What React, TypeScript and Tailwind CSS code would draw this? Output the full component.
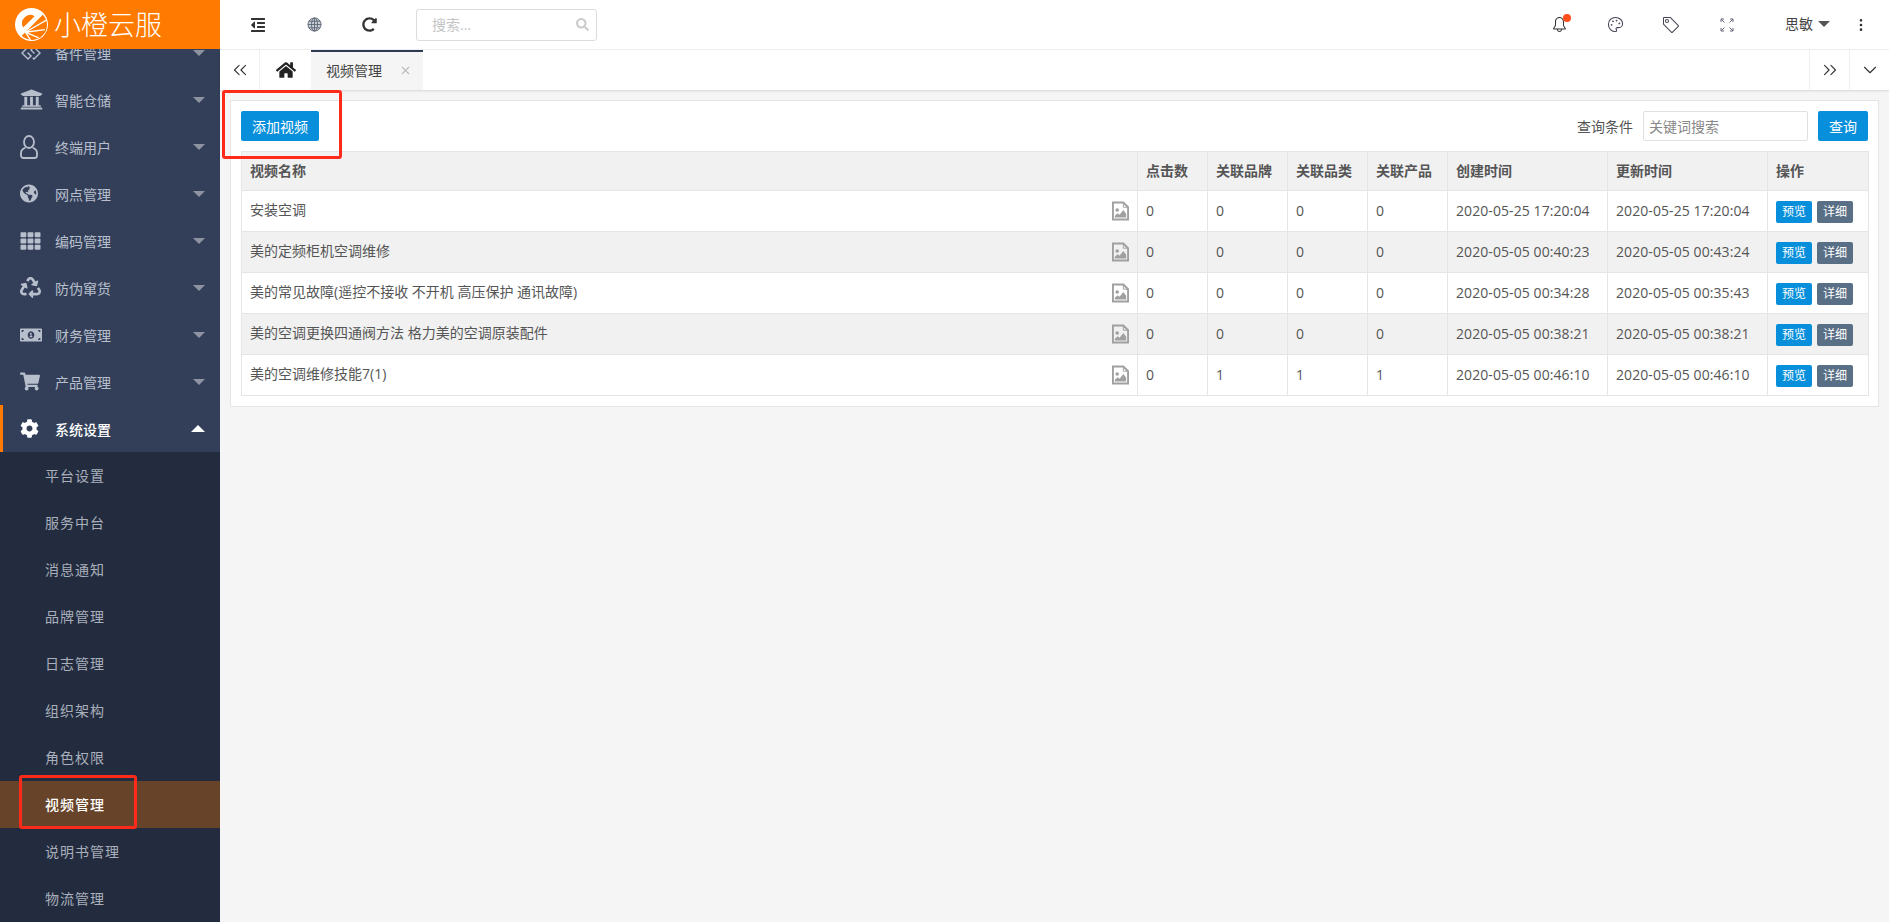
import type { ReactNode } from 'react'
import {
  FaGg,
  FaUniversity,
  FaGlobeAmericas,
  FaTh,
  FaRecycle,
  FaMoneyBillAlt,
  FaShoppingCart,
  FaCog,
  FaHome,
  FaOutdent,
  FaRedoAlt,
  FaSearch,
} from 'react-icons/fa'
import { SlBell, SlTag } from 'react-icons/sl'
import { LuPalette, LuChevronsLeft, LuChevronsRight, LuChevronDown, LuEllipsisVertical, LuX } from 'react-icons/lu'

const fontStack = "font-['Open_Sans','Noto_Sans_CJK_SC',sans-serif]"

function UserIcon() {
  return (
    <svg viewBox="0 0 18 24" className="h-[24px] w-[18px]" fill="none" stroke="currentColor" strokeWidth="1.8">
      <ellipse cx="9" cy="7" rx="5" ry="6" />
      <path d="M5.5 12.5C3 13.5 1 15 1 18v2.5a2.5 2.5 0 0 0 2.5 2.5h11a2.5 2.5 0 0 0 2.5-2.5V18c0-3-2-4.500-4.500-5.500" />
    </svg>
  )
}

const mainMenu: { label: string; icon: ReactNode }[] = [
  { label: '备件管理', icon: <FaGg className="h-[20px] w-[22px]" /> },
  { label: '智能仓储', icon: <FaUniversity className="h-[23px] w-[23px]" /> },
  { label: '终端用户', icon: <UserIcon /> },
  { label: '网点管理', icon: <FaGlobeAmericas className="h-[19px] w-[18px]" /> },
  { label: '编码管理', icon: <FaTh className="h-[20px] w-[21px]" /> },
  { label: '防伪窜货', icon: <FaRecycle className="h-[21px] w-[21px]" /> },
  { label: '财务管理', icon: <FaMoneyBillAlt className="h-[20px] w-[22px]" /> },
  { label: '产品管理', icon: <FaShoppingCart className="h-[19px] w-[20px]" /> },
]

const subMenu = ['平台设置', '服务中台', '消息通知', '品牌管理', '日志管理', '组织架构', '角色权限', '视频管理', '说明书管理', '物流管理']

const columns = [
  { label: '视频名称', width: 'w-[896px]' },
  { label: '点击数', width: 'w-[70px]' },
  { label: '关联品牌', width: 'w-[80px]' },
  { label: '关联品类', width: 'w-[80px]' },
  { label: '关联产品', width: 'w-[80px]' },
  { label: '创建时间', width: 'w-[160px]' },
  { label: '更新时间', width: 'w-[160px]' },
  { label: '操作', width: 'w-[101px]' },
]

const videos = [
  { name: '安装空调', clicks: 0, brand: 0, category: 0, product: 0, created: '2020-05-25 17:20:04', updated: '2020-05-25 17:20:04' },
  { name: '美的定频柜机空调维修', clicks: 0, brand: 0, category: 0, product: 0, created: '2020-05-05 00:40:23', updated: '2020-05-05 00:43:24' },
  { name: '美的常见故障(遥控不接收 不开机 高压保护 通讯故障)', clicks: 0, brand: 0, category: 0, product: 0, created: '2020-05-05 00:34:28', updated: '2020-05-05 00:35:43' },
  { name: '美的空调更换四通阀方法 格力美的空调原装配件', clicks: 0, brand: 0, category: 0, product: 0, created: '2020-05-05 00:38:21', updated: '2020-05-05 00:38:21' },
  { name: '美的空调维修技能7(1)', clicks: 0, brand: 1, category: 1, product: 1, created: '2020-05-05 00:46:10', updated: '2020-05-05 00:46:10' },
]

function LogoMark() {
  return (
    <svg viewBox="0 0 32 32" className="h-[33px] w-[33px] shrink-0">
      <circle cx="16" cy="16" r="16" fill="#fff" />
      <path d="M19 8A8 8 0 0 0 8 19Z" fill="#ff7a00" />
      <path d="M27 6.500A14.500 14.500 0 0 1 6.500 27L10 23.500Z" fill="#ff7a00" />
      <path d="M10 23.500 15 31M10 23.500 23 29M10 23.500 29 21M10 23.500 30 12" stroke="#fff" strokeWidth="1.300" fill="none" />
    </svg>
  )
}

function Triangle({ up = false, className }: { up?: boolean; className: string }) {
  return (
    <svg viewBox="0 0 12 6" className={className} fill="currentColor">
      <path d={up ? 'M6 0 12 6H0Z' : 'M0 0H12L6 6Z'} />
    </svg>
  )
}

function Sidebar() {
  return (
    <aside className="flex h-full w-[220px] shrink-0 flex-col overflow-hidden bg-[#232c3f]">
      <div className="relative z-10 flex h-[49px] shrink-0 items-center gap-[6px] bg-[#ff7a00] pl-[15px]">
        <LogoMark />
        <span className="text-[27px] leading-none font-light text-white">小橙云服</span>
      </div>
      <ul className="-mt-[20px] bg-[#333f59]">
        {mainMenu.map(item => (
          <li key={item.label} className="flex h-[47px] items-center text-[14px] text-[#b8bfcc]">
            <span className="flex w-[55px] shrink-0 justify-start pl-[20px]">{item.icon}</span>
            <span className="pt-[2px]">{item.label}</span>
            <Triangle className="ml-auto mr-[15px] h-[6px] w-[12px] text-[#8d93a1]" />
          </li>
        ))}
        <li className="flex h-[47px] items-center border-l-[3px] border-[#ff7a00] text-[14px] font-medium text-white">
          <span className="flex w-[52px] shrink-0 pl-[17px]">
            <FaCog className="h-[19px] w-[19px]" />
          </span>
          <span className="pt-[2px]">系统设置</span>
          <Triangle up className="ml-auto mr-[15px] h-[7px] w-[14px]" />
        </li>
      </ul>
      <ul>
        {subMenu.map(name =>
          name === '视频管理' ? (
            <li key={name} className="relative flex h-[47px] items-center bg-[#674429] pb-[1px] pl-[45px] text-[14px] font-medium tracking-[1px] text-white">
              {name}
              {/* annotation box from the original screenshot */}
              <span className="absolute left-[19px] -top-[6px] h-[54px] w-[118px] rounded-[3px] border-[3px] border-[#ff2a1a]" />
            </li>
          ) : (
            <li key={name} className="flex h-[47px] items-center pb-[1px] pl-[45px] text-[14px] tracking-[1px] text-[#a9afbb]">
              {name}
            </li>
          ),
        )}
      </ul>
    </aside>
  )
}

function GridGlobe() {
  return (
    <svg viewBox="0 0 16 16" className="ml-[41px] h-[15px] w-[15px] text-[#55606f]" fill="#c9ced6" stroke="currentColor" strokeWidth="0.9">
      <circle cx="8" cy="8" r="7" />
      <ellipse cx="8" cy="8" rx="3.200" ry="7" fill="none" />
      <path d="M8 1v14M1 8h14M2 4.500h12M2 11.500h12" fill="none" />
    </svg>
  )
}

function TopBar() {
  return (
    <header className="flex h-[50px] shrink-0 items-center border-b border-[#f0f0f0] bg-white pl-[30px] text-[#333]">
      <FaOutdent className="h-[16px] w-[16px]" />
      <GridGlobe />
      <FaRedoAlt className="ml-[40px] h-[15px] w-[15px]" />
      <div className="ml-[39px] flex h-[32px] w-[181px] items-center justify-between rounded-[3px] border border-[#dcdcdc] pl-[15px] pr-[7px]">
        <span className="text-[14px] text-[#c4c4c4]">搜索...</span>
        <FaSearch className="h-[13px] w-[13px] text-[#ccc]" />
      </div>
      <div className="ml-auto flex items-center">
        <span className="relative">
          <SlBell className="h-[15px] w-[15px]" />
          <span className="absolute -top-[3px] left-[11px] h-[8px] w-[8px] rounded-full bg-[#ff4d1c]" />
        </span>
        <LuPalette className="ml-[40px] h-[17px] w-[17px] text-[#445]" strokeWidth={1.5} />
        <SlTag className="ml-[39px] h-[16px] w-[16px] -scale-x-100 text-[#445]" />
        <svg viewBox="0 0 14 14" className="ml-[41px] h-[14px] w-[14px] text-[#667]" fill="none" stroke="currentColor" strokeWidth="1">
          <path d="M1 4V1h3M1 1l3.500 3.500M13 4V1h-3M13 1 9.500 4.500M1 10v3h3M1 13l3.500-3.500M13 10v3h-3M13 13 9.500 9.500" />
        </svg>
        <span className="ml-[51px] pb-[2px] text-[14px] text-[#444]">思敏</span>
        <Triangle className="ml-[5px] mb-[2px] h-[6px] w-[12px] text-[#555]" />
        <LuEllipsisVertical className="ml-[23px] mr-[20px] h-[16px] w-[16px] text-[#333]" />
      </div>
    </header>
  )
}

function TabBar() {
  return (
    <div className="flex h-[40px] shrink-0 items-stretch bg-white shadow-[0_1px_2px_rgba(0,0,0,0.12)]">
      <button className="flex w-[40px] items-center justify-center border-r border-[#f0f0f0] text-[#333]">
        <LuChevronsLeft className="h-[22px] w-[22px]" strokeWidth={1.2} />
      </button>
      <button className="flex w-[51px] items-center justify-center text-[#222]">
        <FaHome className="h-[18px] w-[20px]" />
      </button>
      <div className="flex w-[112px] items-center border-t-2 border-[#2f3a55] bg-[#f5f5f5] pb-[2px] pl-[15px] text-[14px] text-[#444]">
        <span>视频管理</span>
        <LuX className="ml-[17px] h-[13px] w-[13px] text-[#bbb]" />
      </div>
      <button className="ml-auto flex w-[40px] items-center justify-center border-l border-[#f0f0f0] text-[#333]">
        <LuChevronsRight className="h-[22px] w-[22px]" strokeWidth={1.2} />
      </button>
      <button className="flex w-[40px] items-center justify-center border-l border-[#f0f0f0] text-[#333]">
        <LuChevronDown className="h-[22px] w-[22px]" strokeWidth={1.2} />
      </button>
    </div>
  )
}

function FileImageIcon() {
  return (
    <svg viewBox="0 0 18 20" className="h-[20px] w-[17px] text-[#a0a0a0]">
      <path d="M1 1h11l5 5v13H1Z" fill="none" stroke="currentColor" strokeWidth="2" />
      <path d="M12 1v5h5" fill="none" stroke="currentColor" strokeWidth="1" />
      <circle cx="5.500" cy="9" r="1.900" fill="currentColor" />
      <path d="M3 17v-2l3-2.500 2 1.500 4-5 3 4v4Z" fill="currentColor" />
    </svg>
  )
}

function VideoTable() {
  return (
    <table className="w-[1627px] table-fixed border-collapse text-[14px] text-[#555]">
      <thead>
        <tr className="h-[39px] bg-[#f1f1f1]">
          {columns.map(col => (
            <th key={col.label} className={`${col.width} border border-[#e5e5e5] px-[8px] pb-[1px] text-left text-[14px] font-bold text-[#555]`}>
              {col.label}
            </th>
          ))}
        </tr>
      </thead>
      <tbody>
        {videos.map((v, i) => (
          <tr key={v.name} className={i % 2 === 1 ? 'h-[41px] bg-[#f1f1f1]' : 'h-[41px] bg-white'}>
            <td className="border border-[#e5e5e5] px-[8px]">
              <div className="flex items-center justify-between">
                <span className="pb-[3px]">{v.name}</span>
                <FileImageIcon />
              </div>
            </td>
            <td className="border border-[#e5e5e5] px-[8px] pb-[1px]">{v.clicks}</td>
            <td className="border border-[#e5e5e5] px-[8px] pb-[1px]">{v.brand}</td>
            <td className="border border-[#e5e5e5] px-[8px] pb-[1px]">{v.category}</td>
            <td className="border border-[#e5e5e5] px-[8px] pb-[1px]">{v.product}</td>
            <td className="border border-[#e5e5e5] px-[8px] pb-[1px] tracking-[0.08px]">{v.created}</td>
            <td className="border border-[#e5e5e5] px-[8px] pb-[1px] tracking-[0.08px]">{v.updated}</td>
            <td className="border border-[#e5e5e5] px-[8px] pt-[1px]">
              <div className="flex gap-[5px]">
                <button className="h-[22px] w-[36px] rounded-[2px] bg-[#078fdb] text-[12px] text-white">预览</button>
                <button className="h-[22px] w-[36px] rounded-[2px] bg-[#596f86] text-[12px] text-white">详细</button>
              </div>
            </td>
          </tr>
        ))}
      </tbody>
    </table>
  )
}

export default function App() {
  return (
    <div className={`flex h-screen overflow-hidden bg-[#f5f5f5] ${fontStack}`}>
      <Sidebar />
      <main className="flex min-w-0 flex-1 flex-col">
        <TopBar />
        <TabBar />
        <div className="p-[10px]">
          <section className="relative border border-[#e5e5e5] bg-white p-[10px]">
            <div className="mb-[10px] flex h-[30px] items-center">
              <button className="h-[30px] w-[78px] rounded-[2px] bg-[#078fdb] text-[14px] text-white">添加视频</button>
              <span className="ml-auto text-[14px] text-[#555]">查询条件</span>
              <input
                className="ml-[10px] h-[30px] w-[165px] rounded-[2px] border border-[#e0e0e0] px-[5px] text-[14px] outline-none placeholder:text-[#888]"
                placeholder="关键词搜索"
              />
              <button className="ml-[10px] h-[30px] w-[50px] rounded-[2px] bg-[#078fdb] text-[14px] text-white">查询</button>
            </div>
            <VideoTable />
            {/* annotation box from the original screenshot */}
            <span className="absolute -left-[9px] -top-[11px] h-[69px] w-[120px] rounded-[3px] border-[3px] border-[#ff2a1a]" />
          </section>
        </div>
      </main>
    </div>
  )
}
